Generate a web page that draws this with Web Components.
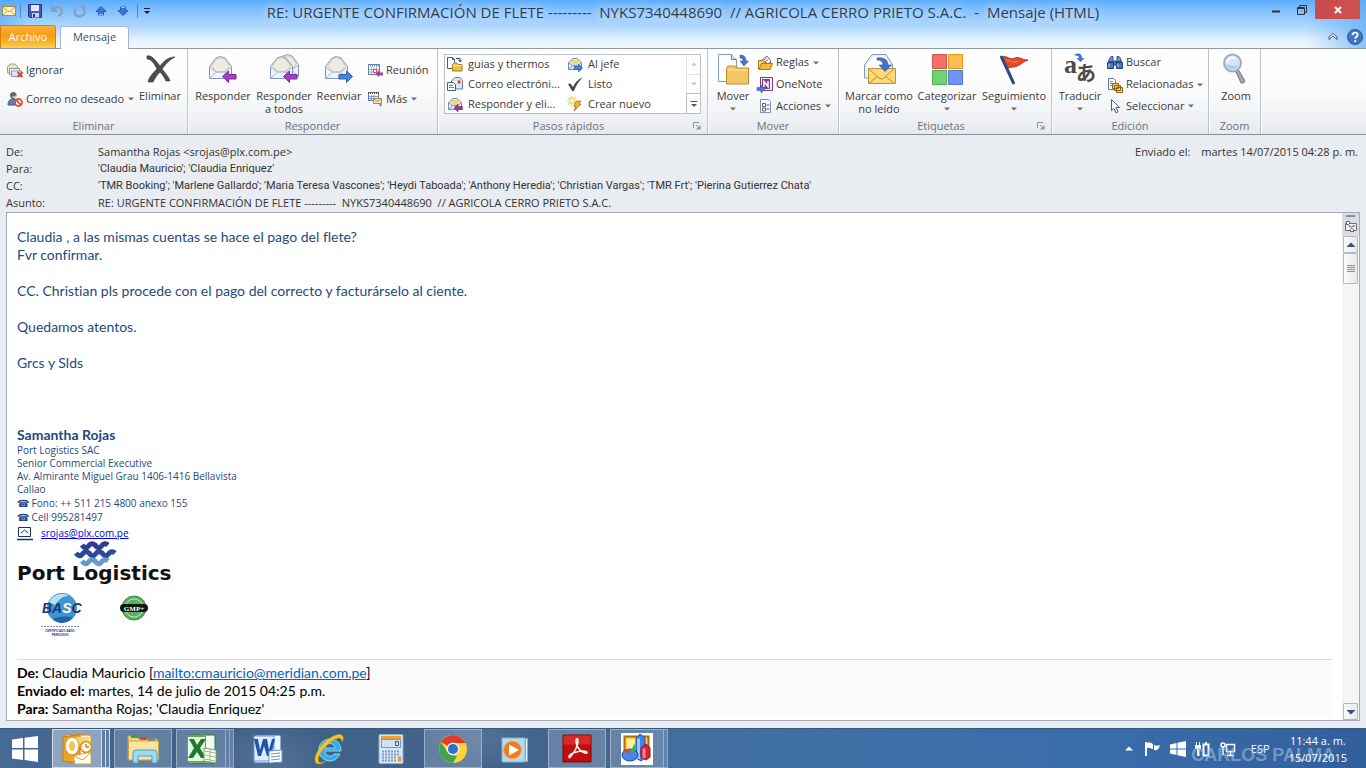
<!DOCTYPE html>
<html lang="es">
<head>
<meta charset="UTF-8">
<meta name="viewport" content="width=device-width, initial-scale=1">
<title>RE: URGENTE CONFIRMACIÓN DE FLETE - Mensaje (HTML)</title>
<style>
  * { box-sizing: border-box; }
  html, body { height: 100%; }
  body {
    margin: 0;
    overflow: hidden;
    font-family: "Open Sans", "Noto Sans", sans-serif;
    font-size: 11px;
    line-height: 13px;
    color: #3b3b3b;
    background: #e9ecf1;
  }
</style>
</head>
<body>
<mail-window>
  <title-bar slot="title">RE: URGENTE CONFIRMACIÓN DE FLETE ---------  NYKS7340448690  // AGRICOLA CERRO PRIETO S.A.C.  -  Mensaje (HTML)</title-bar>

  <tab-strip slot="tabs"></tab-strip>

  <ribbon-bar slot="ribbon">
    <ribbon-group label="Eliminar" style="--w: 188px">
      <ribbon-stack style="--w: 132px">
        <small-button icon="ignore">Ignorar</small-button>
        <small-button icon="junk" arrow>Correo no deseado</small-button>
      </ribbon-stack>
      <large-button icon="cross" style="--w: 48px">Eliminar</large-button>
    </ribbon-group>

    <ribbon-group label="Responder" style="--w: 250px">
      <large-button icon="reply" style="--w: 62px">Responder</large-button>
      <large-button icon="replyAll" style="--w: 60px">Responder<br>a todos</large-button>
      <large-button icon="forward" style="--w: 50px">Reenviar</large-button>
      <ribbon-stack>
        <small-button icon="meeting">Reunión</small-button>
        <small-button icon="more" arrow>Más</small-button>
      </ribbon-stack>
    </ribbon-group>

    <ribbon-group label="Pasos rápidos" launcher style="--w: 270px">
      <quick-steps>
        <small-button icon="folderMove">guias y thermos</small-button>
        <small-button icon="replySmall">Al jefe</small-button>
        <small-button icon="mailTeam">Correo electróni...</small-button>
        <small-button icon="check">Listo</small-button>
        <small-button icon="replyDelete">Responder y eli...</small-button>
        <small-button icon="createNew">Crear nuevo</small-button>
      </quick-steps>
    </ribbon-group>

    <ribbon-group label="Mover" style="--w: 131px">
      <large-button icon="move" arrow style="--w: 42px">Mover</large-button>
      <ribbon-stack>
        <small-button icon="rules" arrow>Reglas</small-button>
        <small-button icon="oneNote">OneNote</small-button>
        <small-button icon="actions" arrow>Acciones</small-button>
      </ribbon-stack>
    </ribbon-group>

    <ribbon-group label="Etiquetas" launcher style="--w: 213px">
      <large-button icon="unread" style="--w: 72px">Marcar como<br>no leído</large-button>
      <large-button icon="categories" arrow style="--w: 64px">Categorizar</large-button>
      <large-button icon="flag" arrow style="--w: 70px">Seguimiento</large-button>
    </ribbon-group>

    <ribbon-group label="Edición" style="--w: 157px">
      <large-button icon="translate" arrow style="--w: 48px">Traducir</large-button>
      <ribbon-stack>
        <small-button icon="find">Buscar</small-button>
        <small-button icon="related" arrow>Relacionadas</small-button>
        <small-button icon="pointer" arrow>Seleccionar</small-button>
      </ribbon-stack>
    </ribbon-group>

    <ribbon-group label="Zoom" style="--w: 52px">
      <large-button icon="zoom" style="--w: 46px">Zoom</large-button>
    </ribbon-group>
  </ribbon-bar>

  <message-header slot="header">
    <header-field label="De:">Samantha Rojas &lt;srojas@plx.com.pe&gt;</header-field>
    <header-field label="Para:" people>'Claudia Mauricio'; 'Claudia Enriquez'</header-field>
    <header-field label="CC:" people>'TMR Booking'; 'Marlene Gallardo'; 'Maria Teresa Vascones'; 'Heydi Taboada'; 'Anthony Heredia'; 'Christian Vargas'; 'TMR Frt'; 'Pierina Gutierrez Chata'</header-field>
    <header-field label="Asunto:">RE: URGENTE CONFIRMACIÓN DE FLETE ---------  NYKS7340448690  // AGRICOLA CERRO PRIETO S.A.C.</header-field>
    <header-field slot="sent" label="Enviado el:" compact>martes 14/07/2015 04:28 p. m.</header-field>
  </message-header>

  <message-body slot="body"></message-body>

  <task-bar slot="taskbar">
    <task-item icon="outlook" label="Outlook" open active stack="2"></task-item>
    <task-item icon="explorer" label="Explorador" open></task-item>
    <task-item icon="excel" label="Excel" open stack="2"></task-item>
    <task-item icon="word" label="Word"></task-item>
    <task-item icon="ie" label="Internet Explorer"></task-item>
    <task-item icon="calc" label="Calculadora"></task-item>
    <task-item icon="chrome" label="Chrome" open></task-item>
    <task-item icon="player" label="Reproductor"></task-item>
    <task-item icon="acrobat" label="Acrobat" open></task-item>
    <task-item icon="charts" label="Gráficos" open stack="1"></task-item>
  </task-bar>
</mail-window>

<script>
// Shapes shared by several icons
const OPEN_MAIL = `
  <path d="M2.5 13.5 9 5q4-3 9 0l6.5 8.500v12h-22z" fill="#eef3fa" stroke="#8199bd"/>
  <path d="M4.500 13 9.500 6q4-2.500 8 0l5 7-5 6h-8z" fill="#efebe0" stroke="#cfcaba"/>
  <path d="M3 14.500 9.500 19h8l6.500-4.500M3 25l6.500-6M24 25l-6.500-6" fill="none" stroke="#a3b5d1"/>`;
const OPEN_MAIL_SMALL = `
  <path d="M1.5 6.500 6 2.500h4l4.500 4v7h-13z" fill="#e8eef8" stroke="#6f8dbc"/>
  <path d="M3.500 6.500 5 4h6l1.500 2.500-4 3.500z" fill="#f7d77a"/>
  <path d="m2 13 4-3.500h4l4 3.500M2 7l4 3M14 7l-4 3" fill="none" stroke="#7f9ac5"/>`;
const PURPLE_ARROW = `<path d="m15.500 23.500 6-5.500v3.500H29v4.500h-7.500v3.500z" fill="#a33fc4" stroke="#7b2a9a"/>`;
const PAGE = `<path d="M1.500 1.500h5l2 2v9h-7z" fill="#fff" stroke="#5f7ba6"/>`;

// name: [size, markup]
const ICONS = {
  mail: [16, `<rect x="1.500" y="3.500" width="13" height="9" fill="#fff3cb" stroke="#b08a2e"/><path d="m2 4 6 5 6-5M2 12l4-4M14 12l-4-4" fill="none" stroke="#d2a336"/>`],
  save: [16, `<path d="M1.500 1.500h13v13h-12l-1-1z" fill="#4a56b8" stroke="#2b3484"/><path d="M4 2h8v6H4z" fill="#e3e9fb"/><path d="M5 10h7v4.500H5z" fill="#cdd3e6"/><path d="M6 11h2v3H6z" fill="#2b3484"/>`],
  undo: [16, `<path d="M5 6c3-3 8-2 8 2 0 2-1 4-4 5" fill="none" stroke="#8f9db0" stroke-width="2.200"/><path d="M2 2v7h7z" fill="#8f9db0"/>`],
  redo: [16, `<path d="M11.500 4.500a5 5 0 1 1-7 1" fill="none" stroke="#8f9db0" stroke-width="2.200"/><path d="M7.500 2H14v6z" fill="#8f9db0"/>`],
  up: [16, `<path d="m8 3.500 5 5h-2.500V12h-5V8.500H3z" fill="#3f74e0" stroke="#2856b8"/><path d="M6 11.500h4" stroke="#9dc0ff"/>`],
  down: [16, `<path d="m8 12.500 5-5h-2.500V4h-5v3.500H3z" fill="#3f74e0" stroke="#2856b8"/><path d="M6 4.500h4" stroke="#9dc0ff"/>`],
  customize: [8, `<path d="M1 1.500h6" stroke="#1b1b1b"/><path d="M1 4h6L4 7z" fill="#1b1b1b"/>`],
  minimize: [16, `<path d="M4 9.500h8" stroke="#2e3338" stroke-width="2"/>`],
  restore: [16, `<path d="M3.500 5.500h7v7h-7zM3 6.500h8M5.500 5.500v-2h7v7h-2" fill="none" stroke="#2e3338"/>`],
  close: [16, `<path d="m5 5 6 6M11 5l-6 6" stroke="#fff" stroke-width="2"/>`],
  collapse: [16, `<path d="m4 8 4-3.500L12 8v2.500L8 7l-4 3.500z" fill="#fff" stroke="#45566b"/>`],
  help: [16, `<circle cx="8" cy="8" r="7.500" fill="#3f76c9" stroke="#2a559b"/><path d="M5.500 6.200c0-3.400 5.200-3.400 5.200-.4 0 2-2.500 2-2.500 4" fill="none" stroke="#fff" stroke-width="1.800"/><circle cx="8.200" cy="12.200" r="1.100" fill="#fff"/>`],
  launcher: [8, `<path d="M.5 6V.5H6M3 3l3 3" fill="none" stroke="#8c949e"/><path d="M7.500 3v4.500H3z" fill="#8c949e"/>`],
  arrow: [6, `<path d="M0 1.500h6l-3 3z" fill="#6c6c6c"/>`],

  ignore: [16, `<path d="M.5 5 3 2h5l3 3v6H.5z" fill="#f5e3a4" stroke="#8aa0c3"/><path d="M2.500 6.500h10v6h-10z" fill="#edf2fa" stroke="#8199bd"/><path d="M4.500 9h10v5.500h-10z" fill="#dfe7f3" stroke="#8199bd"/><path d="m10.500 10 5 5M15.500 10l-5 5" stroke="#e0452b" stroke-width="2"/>`],
  junk: [16, `<path d="M1 14c0-4 2-6 5-6s5 2 5 6z" fill="#5a7fc0" stroke="#3c5b93"/><path d="M3 4c0-4 6.500-4 6.500 0 0 2-1.500 4.500-3.200 4.500S3 6 3 4z" fill="#64686f"/><path d="M5 5c2 1 3 .5 4-1v2c-.6 1.500-3 2-4-1z" fill="#f1d2b4"/><circle cx="11.500" cy="11.500" r="3.500" fill="#fff" stroke="#e2502f" stroke-width="1.800"/><path d="m9.200 9.200 4.600 4.600" stroke="#e2502f" stroke-width="1.800"/>`],
  cross: [32, `<path d="M3 3c5-1 8 4 13 10 4-5 8-9 15-9-6 3-9 7-13 12 4 5 7 8 8 12h-4c-2-4-4-7-6-9-3 3-5 6-7 10H4c1-5 5-9 9-13C10 10 7 6 3 6z" fill="#4d4d4d" stroke="#2f2f2f" stroke-width=".6"/>`],
  reply: [32, OPEN_MAIL + PURPLE_ARROW],
  replyAll: [32, `<g transform="translate(6 -2)">${OPEN_MAIL}</g>` + OPEN_MAIL + PURPLE_ARROW],
  forward: [32, OPEN_MAIL + `<path d="m29.500 23.500-6-5.500v3.500H16v4.500h7.500v3.500z" fill="#4a86e0" stroke="#2a5fae"/>`],
  meeting: [16, `<path d="M1.500 2.500h11v10h-11z" fill="#fff" stroke="#5d7fb9"/><path d="M1 3.500h12" stroke="#5d7fb9" stroke-width="2" stroke-dasharray="1 1"/><path d="M2 7.500h10M2 10h10M4.500 5v7M7 5v7M9.500 5v7" stroke="#9cb2d8"/><path d="M6.500 7.500h3v3h-3z" fill="#fff" stroke="#e34a2d"/><path d="m8.500 12 3.500-3.500v2h4v3h-4V15z" fill="#9b3bbd"/>`],
  more: [16, `<path d="M1.500 1.500h10v8h-10z" fill="#fff" stroke="#5d7fb9"/><path d="M1 2h11" stroke="#4a4a4a" stroke-width="2" stroke-dasharray="1 1"/><path d="M2 5.500h9M2 7.500h9M4.500 4v5M7 4v5" stroke="#7f9cce"/><path d="M6.500 7.500h8v5h-8z" fill="#ffe9a6" stroke="#b08a2e"/><path d="m7 8 3.500 2.500L14 8M12 14h3M13.500 12.500v3" fill="none" stroke="#7d86a0"/>`],
  folderMove: [16, `<path d="M.5 1.500h5l2 2v9h-7z" fill="#fff" stroke="#3f5d8f"/><path d="M5.500 1.500v2h2" fill="none" stroke="#3f5d8f"/><path d="M9 2.500h4V5M11.500 4l1.500 2 1.500-2" fill="none" stroke="#2b3f63"/><path d="M5.500 8.500 7 7h3l1 1.500h4v6.500H5.500z" fill="#f3c04f" stroke="#a87a1c"/><path d="M6 9.500h8.500" stroke="#fff0b5"/>`],
  replySmall: [16, OPEN_MAIL_SMALL + `<path d="m15.500 12-4-4v2.500H7v3h4.500V16z" fill="#3f80e0" stroke="#215aad" stroke-width=".6"/>`],
  replyDelete: [16, OPEN_MAIL_SMALL + `<path d="m7 12 4-4v2.500h4.500v3H11V16z" fill="#8f3fa4" stroke="#6b2a8a" stroke-width=".6"/>`],
  mailTeam: [16, `<path d="M4.500 5 8 1.500h5l2.500 3.500v8h-11z" fill="#dce6f6" stroke="#5f7ba6"/><path d="M5 5h10v2H5z" fill="#fff"/><circle cx="12" cy="6" r="1.800" fill="#e34a2d"/><path d="M.5 6.500h6l2 2v6h-8z" fill="#fff" stroke="#3f5d8f"/><path d="M2 9.500h4M2 11.500h5" stroke="#5f86c8"/>`],
  check: [16, `<path d="m1 8 2.500-.5L6 11c2-4.500 5-8 9.500-9.500C12 5 9 9.500 7 15H5z" fill="#4a4a4a"/>`],
  createNew: [16, `<path d="M5 0v10M0 5h10M1.500 1.500l7 7M8.500 1.500l-7 7" stroke="#e8c84e" stroke-width="1.200"/><circle cx="5" cy="5" r="2" fill="#fff4b0"/><path d="m9 5.500 5-.5-2.500 3H14l-7 7 2-4.500H7z" fill="#f6b92f" stroke="#8f6311" stroke-width=".7"/>`],
  move: [32, `<path d="M1.500 1.500h13l5 5v22h-18z" fill="#fdfeff" stroke="#8199bd"/><path d="M14.500 1.500v5h5" fill="#dfe7f3" stroke="#5f7ba6"/><path d="M23 2c5 0 6 3 6 6h2.500L27 13l-4-5h3c0-2-.5-3-3-3z" fill="#3f74d0" stroke="#28509c" stroke-width=".5"/><path d="M9.500 15.500 11 13h7l1.500 2h12v16h-22z" fill="#f3c665" stroke="#b98a30"/><path d="M10.500 17h20" stroke="#fde8ae"/>`],
  rules: [16, `<path d="M1.500 5.500h5l1 1.500h6v7h-12z" fill="#f7cf6b" stroke="#a87a1c"/><path d="m5 5 5-4 4 5-3 3z" fill="#fff" stroke="#5f7ba6"/><path d="m7 5 2.500-2M8 7l3.500-3" stroke="#e34a2d"/><path d="M2 14.500 4.500 8.500H15.500l-2.500 6z" fill="#f5b93d" stroke="#a87a1c"/>`],
  oneNote: [16, `<path d="M3.500.5h12v13h-12z" fill="#fbeefb" stroke="#80397b"/><path d="M5 2h8v10H5z" fill="#8a3a86"/><path d="M7 10V4.500l4 5V4" fill="none" stroke="#fff" stroke-width="1.500"/><path d="m8 12-4-4v2.500H0v3h4V16z" fill="#3f80e0" stroke="#215aad" stroke-width=".6"/>`],
  actions: [16, `<path d="M3.500 1.500h8l2 2v11h-10z" fill="#f5f8fd" stroke="#7d93b8"/><path d="M9.500 7h3M9.500 11h3" stroke="#48699f"/><path d="M5.500 5.500h3v3h-3zM5.500 10h3v3h-3z" fill="#fff" stroke="#5b6472"/>`],
  unread: [32, `<path d="M1.500 12 9 1.500h14l6.500 10.500v13h-28z" fill="#e9f0fa" stroke="#8199bd"/><path d="M4 12 10 3.500h12l5.500 8.500v4H4z" fill="#fff"/><path d="M5.500 15.500h27v15h-27z" fill="#fbd978" stroke="#c09130"/><path d="m6 16 10 9q2.500 2 5 0l10-9M6 30l9-7M31 30l-9-7" fill="none" stroke="#c09130"/><path d="M14 5c7-1 11 2 11 7h3.500L22 18.500 16 12h4c0-3-2-5-6-5z" fill="#3f74d0" stroke="#28509c" stroke-width=".6"/>`],
  categories: [32, `<path d="M1.500 1.500h14v14h-14z" fill="#f4716b" stroke="#d8534d"/><path d="M17.500 1.500h14v14h-14z" fill="#fcbb55" stroke="#e39a12"/><path d="M1.500 17.500h14v14h-14z" fill="#72d170" stroke="#4cb54a"/><path d="M17.500 17.500h14v14h-14z" fill="#7193f2" stroke="#5478dd"/>`],
  flag: [32, `<path d="M4 4c5-2 8 4 13 1 4-2 6 2 13 2-6 2-7 5-11 6-4 2-6 0-10 3z" fill="#e8472a" stroke="#b7301a"/><path d="M8 7c4 0 6 4 12 1" fill="none" stroke="#f98a6a"/><path d="m3.500 4 12 26" stroke="#2e4b80" stroke-width="3" stroke-linecap="round"/>`],
  translate: [32, `<text x="0" y="20" font-family="Liberation Serif, serif" font-weight="bold" font-size="26" fill="#4a4a4a">a</text><text x="12" y="28" font-family="Noto Sans CJK JP, sans-serif" font-weight="bold" font-size="20" fill="#4a4a4a">あ</text><path d="M10 2c5-3 8-1 8 3h2.500l-4 4-4-4H15c0-2-2-2.500-5-3z" fill="#3f74d0"/>`],
  find: [16, `<path d="M2.500 3.500 4 1.500h2v5H1.500zM13.500 3.500 12 1.500h-2v5h4.500z" fill="#6d93cf" stroke="#2b4f8d"/><path d="M.5 7.500h6v6h-6zM9.500 7.500h6v6h-6zM6.500 6h3v4h-3z" fill="#4d76b8" stroke="#264679"/><path d="M2 9v3M11 9v3" stroke="#c5d8f3"/>`],
  related: [16, PAGE + `<path d="M3 4.500h3M3 6.500h4M3 8.500h4" stroke="#5f86c8"/><path d="M5.500 6.500h6v5h-6zM7.500 8.500h6v5h-6zM9.500 10.500h6v5h-6z" fill="#f7cf6b" stroke="#8a6414"/>`],
  pointer: [16, `<path d="m4.500 1.500 8 8H9l2 4.500-2 .8-2-4.500-2.500 2.500z" fill="#fff" stroke="#44618f"/>`],
  zoom: [32, `<path d="m16 17 2-1 7 12q-1 3-4 2l-5-11z" fill="#a9a9a9" stroke="#777"/><circle cx="12.500" cy="10" r="8.500" fill="#d5e6fb" stroke="#a4acb8" stroke-width="2"/><path d="M6 11c1 6 9 8 13 1-5 1-9 1-13-1z" fill="#a9cdf6"/><path d="M7 9c1-4 5-5 8-4" fill="none" stroke="#fff" stroke-width="2"/>`],
  reading: [16, `<path d="M2.500 4.500h11v7h-11z" fill="#f2eef2" stroke="#6a6f77"/><path d="m6 6 1 2h2l2-2v2" fill="none" stroke="#8a5f70"/><path d="M3.500 2.500h3v2l-1 1h-2zM7.500 12.500v-2l1-1h1l1 1v2z" fill="#fff" stroke="#5f6368"/>`],
  grip: [8, `<path d="M0 .5h8M0 2.500h8M0 4.500h8M0 6.500h8" stroke="#8b9097"/>`],
  scrollUp: [10, `<path d="m5 2.500 4.500 4.500h-9z" fill="#3c4f7d"/>`],
  scrollDown: [10, `<path d="m5 7.500 4.500-4.500h-9z" fill="#3c4f7d"/>`],
  galleryUp: [6, `<path d="M0 4.500h6l-3-3z" fill="#c3c7cc"/>`],
  galleryDown: [6, `<path d="M0 1.500h6l-3 3z" fill="#c3c7cc"/>`],
  galleryMore: [8, `<path d="M.5 1.500h7" stroke="#555"/><path d="M1 4h6L4 7z" fill="#555"/>`],
  envelopeSign: [16, `<path d="M1.500 2.500h12v9h-12z" fill="#fff" stroke="#17365d"/><path d="m4 8 3.500-3L11 8" fill="none" stroke="#17365d"/><path d="M0 14.500h16" stroke="#17365d" stroke-width="1.500"/>`],

  windows: [26, `<path d="M0 3.500 11 2v10H0zM12.500 1.800 26 0v12H12.500zM0 13.500h11V24L0 22.500zM12.500 13.500H26V26l-13.500-2z" fill="#fff"/>`],
  outlook: [32, `<path d="M4 2h24q2 0 2 2v24H6z" fill="#fff6d8" stroke="#d88b15"/><path d="M2 4 19 1.500v29L2 28z" fill="#f0a31e" stroke="#ce7b0c"/><path d="M15 4h13v9H15z" fill="#ffd56a"/><ellipse cx="11" cy="13" rx="5" ry="7" fill="#f7c348" stroke="#fff" stroke-width="4"/><ellipse cx="11" cy="13" rx="7" ry="9" fill="none" stroke="#dc8613"/><circle cx="25" cy="14" r="5.500" fill="#fff8e5" stroke="#d9921f" stroke-width="1.500"/><path d="M25 11v3h3" fill="none" stroke="#88560d"/><path d="m12 23 18-4v12H14z" fill="#fffdf3" stroke="#d3a44c"/><path d="m12 23 10 4 8-8" fill="none" stroke="#d3a44c"/>`],
  explorer: [34, `<path d="M2 4h9l1.500 3H31v20H2z" fill="#efd485" stroke="#c19d40"/><path d="M5 3h7v3H5z" fill="#39a04b"/><path d="M14 5h7v3h-7z" fill="#d8472c"/><path d="M22 7h7v3h-7z" fill="#3f7fd6"/><path d="M2.500 9h30v19h-30z" fill="#f8e3a0" stroke="#c9a54a"/><path d="M7 31V21q0-3 3-3h18q3 0 3 3v10h-5v-7H12v7z" fill="#9bdcf3" stroke="#4a9fc8"/>`],
  excel: [32, `<path d="M5 2h24q1 0 1 1v26q0 1-1 1H3z" fill="#f1faed" stroke="#287a31"/><path d="m2 3 19-2v29L2 29z" fill="#5cab4b"/><path d="M3 4h17v24H3z" fill="#e6f5df"/><path d="M4 6h5l3 6 4-6h5l-6 9 6 10h-5l-4-6-4 6H3l6-10z" fill="#1f7a31"/><path d="m19 15 12 2v13l-12-2z" fill="#fff" stroke="#65a856"/><path d="m20 18 10 2M20 22l10 2M20 26l10 2M25 16v13" stroke="#8cbb7e"/>`],
  word: [32, `<path d="M5 2h24q1 0 1 1v26q0 1-1 1H3z" fill="#eff5fd" stroke="#3768b2"/><path d="M3 3h20v25H3z" fill="#dfebfa" stroke="#6f99d6"/><path d="M3 6h4l2 11 3-11h4l2 11 3-11h3l-4 17h-4l-3-10-3 10H7z" fill="#1c55ad"/><path d="m18 18 13-1v12l-13 1z" fill="#fff" stroke="#6d92c9"/><path d="m20 21 9-1M20 24l9-1M20 27l9-1" stroke="#7296c9"/>`],
  ie: [32, `<path d="M17 6a11 11 0 1 0 10 15h-6c-3 4-9 2-9-3h16c0-7-4-12-11-12zm-5 9c1-6 9-6 10 0z" fill="#35aee8" stroke="#a7e5fa" stroke-width=".8"/><path d="M6 31C-1 31 2 20 9 12S28-2 30 4c1 2-1 5-1 5 0-4-3-6-10-1C10 14 3 25 6 29c2 2 7-1 7-1-2 2-5 3-7 3z" fill="#f7c51f" stroke="#c99812" stroke-width=".5"/>`],
  calc: [32, `<path d="M5 1.500h22q1 0 1 1v27q0 1-1 1H5q-1 0-1-1v-27q0-1 1-1z" fill="#d7e6f4" stroke="#8fb2d2"/><path d="M6 3h20v3H6z" fill="#f29c38"/><path d="M6.500 6.500h19v8h-19z" fill="#cfe3f4" stroke="#7998b5"/><path d="M20.500 8.500h3v4h-3z" fill="none" stroke="#41556b"/><path d="M7 18.500h18M7 21.500h18M7 24.500h15M7 27.500h15" stroke="#7da0bf" stroke-width="2" stroke-dasharray="2 1"/><path d="M23 23.500h3v5h-3z" fill="#f0932b"/>`],
  chrome: [32, `<circle cx="16" cy="16" r="14" fill="#fdd23a"/><path d="M16 16 3.900 9a14 14 0 0 1 24.200 0L29 10H16z" fill="#dd3d2f"/><path d="M16 30A14 14 0 0 1 3.900 9l6.500 10L16 22l4 1z" fill="#3fa54a"/><path d="M10 10h18.800L16 9z" fill="#c8301f"/><circle cx="16" cy="16" r="6.500" fill="#eef2f6"/><circle cx="16" cy="16" r="5" fill="#2f72c4"/>`],
  player: [32, `<path d="M22 5h7v24h-7z" fill="#6db7d8"/><path d="M3 5h23v24H3z" fill="#b6d9ec" stroke="#7bb4d2"/><path d="M27.500 6v22" stroke="#dff2fb"/><circle cx="13.500" cy="17" r="9" fill="#f07c1f" stroke="#f6b173"/><path d="m10 11.500 10 5.500-10 5.500z" fill="#fff"/>`],
  acrobat: [30, `<path d="M1 1h28v27H1z" fill="#c30d0d" stroke="#7f0707"/><path d="M1.500 1.500h27v9h-27z" fill="#d62a25"/><path d="M7 23c-1-3 8-6 14-6 5 0 5 3 2 2-5-1-9-7-9-12 0-3 2-3 2 0 0 5-4 12-7 15-1 2-2 2-2 1z" fill="none" stroke="#fff" stroke-width="1.500"/>`],
  charts: [32, `<path d="M0 0h32v32H0z" fill="#fff"/><path d="M3.500 3.500h24v19h-24z" fill="#ffcf3a" stroke="#a96d13" stroke-width="2"/><path d="M6 6h12v10H6z" fill="#fff0a0"/><path d="m15 5 4-4 5 4v20l-4 3-5-3z" fill="#3f84ee" stroke="#1b4da8"/><path d="M16 5.500h3V26h-3z" fill="#9cc6ff"/><path d="m20 15 5-4 4 4v9l-4 3-5-3z" fill="#d82430" stroke="#941018"/><path d="M21.500 15.500h3V25h-3z" fill="#ff7f84"/><ellipse cx="9" cy="22" rx="8" ry="6" fill="#4a86e4" stroke="#1b4da8"/><path d="m9 21-6-3c2-2 4-2 6-2z" fill="#e5452d"/><path d="m9 19 5-9v8z" fill="#3fb449"/>`],
  trayUp: [10, `<path d="m5 2.500 4 4H1z" fill="#fff"/>`],
  trayFlag: [18, `<path d="M3 2v14" stroke="#fff" stroke-width="2"/><path d="M4 3c3-1 4 0 6 1v5c-2 0-3-2-6-1zM11 5c2 1 4 1 6 0-1 2-1 4-3 5-1 .5-3 0-3 0z" fill="#fff"/>`],
  trayWindows: [16, `<path d="M0 3.500 6.500 2v5.500H0zM7.500 1.800 16 0v7.500H7.500zM0 8.500h6.500V14L0 12.500zM7.500 8.500H16V16l-8.500-1.800z" fill="#fff"/>`],
  trayBattery: [16, `<path d="M8.500 3.500h5v11h-5z" fill="none" stroke="#fff" stroke-width="2"/><path d="M10 1h2v2h-2zM1 1h1v3H1zM4 1h1v3H4zM0 4h6v4H4.500v7H2V8H0z" fill="#fff"/>`],
  trayNetwork: [16, `<path d="M6.500 3.500h8v7h-8zM10.500 11v3M7 14.500h7" fill="none" stroke="#fff" stroke-width="1.500"/><circle cx="3" cy="4" r="2" fill="none" stroke="#fff" stroke-width="1.500"/><path d="M3 6v8" stroke="#fff" stroke-width="1.500"/>`],
};

// Base class: clones the template of the class into an open shadow root
class ShadowElement extends HTMLElement {
  constructor() {
    super();
    this.attachShadow({ mode: "open" });
    const template = document.createElement("template");
    template.innerHTML = `<style>
      *, :host { box-sizing: border-box; }
      button { font: inherit; color: inherit; background: none; border: 0; padding: 0; margin: 0; }
      ${this.styles()}
    </style>${this.render()}`;
    this.shadowRoot.appendChild(template.content.cloneNode(true));
  }
  styles() { return ":host { display: block; }"; }
  render() { return "<slot></slot>"; }
}

class UiIcon extends ShadowElement {
  styles() {
    return `:host { display: inline-block; flex: none; line-height: 0; } svg { display: block; overflow: visible; }`;
  }
  render() {
    const [size, markup] = ICONS[this.getAttribute("name")];
    return `<svg width="${size}" height="${size}" viewBox="0 0 ${size} ${size}" aria-hidden="true">${markup}</svg>`;
  }
}

class MailWindow extends ShadowElement {
  styles() {
    return `
      :host { display: flex; flex-direction: column; height: 100vh; }
      .chrome {
        background:
          linear-gradient(to right, rgba(80,165,250,.6), rgba(80,165,250,0) 30px),
          linear-gradient(to left, rgba(95,170,245,.7), rgba(95,170,245,0) 60px),
          linear-gradient(#5aadfd, #8cc6ff 14px, #b4dafd 28px, #e6f3ff 40px, #f4f9fe);
      }
      slot[name="body"] { display: flex; flex: 1; min-height: 0; padding: 0 6px 7px; }
    `;
  }
  render() {
    return `
      <div class="chrome"><slot name="title"></slot><slot name="tabs"></slot></div>
      <slot name="ribbon"></slot>
      <slot name="header"></slot>
      <slot name="body"></slot>
      <slot name="taskbar"></slot>
    `;
  }
}

class TitleBar extends ShadowElement {
  styles() {
    return `
      :host { display: grid; grid-template-columns: 1fr auto 1fr; align-items: start; height: 25px; }
      nav { display: flex; align-items: center; height: 22px; padding-left: 1px; }
      nav button { display: flex; justify-content: center; width: 22px; }
      nav button:first-child { width: 16px; }
      nav button:last-child { width: 12px; }
      i { width: 1px; height: 14px; margin: 0 3px; background: #5d87b5; }
      h1 {
        margin: 0; font-size: 15px; font-weight: 400; line-height: 25px; white-space: pre; color: #2f3d4d;
        text-shadow: 0 0 8px rgba(255,255,255,.8), 0 0 14px rgba(255,255,255,.6);
      }
      .controls { display: flex; justify-content: flex-end; padding-right: 6px; }
      .controls button { display: flex; align-items: center; justify-content: center; width: 26px; height: 19px; }
      .controls .close { width: 45px; margin-left: 0; background: linear-gradient(to right, #c74a4c, #d0524f); }
    `;
  }
  render() {
    const tool = (name, label) => `<button aria-label="${label}"><ui-icon name="${name}"></ui-icon></button>`;
    return `
      <nav aria-label="Acceso rápido">
        ${tool("mail", "Mensaje")}<i></i>
        ${tool("save", "Guardar")}${tool("undo", "Deshacer")}${tool("redo", "Rehacer")}
        ${tool("up", "Anterior")}${tool("down", "Siguiente")}<i></i>${tool("customize", "Personalizar")}
      </nav>
      <h1><slot></slot></h1>
      <div class="controls">
        <button aria-label="Minimizar"><ui-icon name="minimize"></ui-icon></button>
        <button aria-label="Restaurar"><ui-icon name="restore"></ui-icon></button>
        <button class="close" aria-label="Cerrar"><ui-icon name="close"></ui-icon></button>
      </div>
    `;
  }
}

class TabStrip extends ShadowElement {
  styles() {
    return `
      :host { display: flex; align-items: flex-end; height: 24px; border-bottom: 1px solid #8f9aa8; }
      .file {
        align-self: stretch; width: 56px; padding-bottom: 2px; color: #fff; border: 1px solid #d67d0a; border-bottom: 0;
        border-radius: 0 3px 0 0; background: linear-gradient(#fdb13a, #f79a12 45%, #f9a81c 60%, #ffd04c);
      }
      .tab {
        height: 23px; width: 69px; margin: 0 0 -1px 4px; padding-bottom: 4px; background: #fff; color: #43505f;
        border: 1px solid #a3b6cb; border-bottom: 0; border-radius: 3px 3px 0 0;
      }
      .right { display: flex; align-items: center; gap: 6px; margin-left: auto; padding-right: 3px; height: 100%; }
      .right button { display: flex; }
    `;
  }
  render() {
    return `
      <button class="file">Archivo</button>
      <button class="tab">Mensaje</button>
      <div class="right">
        <button aria-label="Contraer la cinta"><ui-icon name="collapse"></ui-icon></button>
        <button aria-label="Ayuda"><ui-icon name="help"></ui-icon></button>
      </div>
    `;
  }
}

class RibbonBar extends ShadowElement {
  styles() {
    return `
      :host {
        display: flex; height: 86px; border-bottom: 1px solid #8b9097;
        background: linear-gradient(#fff, #fbfbfc 50%, #e7eaee);
      }
    `;
  }
}

class RibbonGroup extends ShadowElement {
  styles() {
    return `
      :host {
        display: flex; flex-direction: column; flex: none; width: var(--w);
        border-right: 1px solid #bcc2c9; box-shadow: 1px 0 #fff;
      }
      .items { display: flex; flex: 1; padding: 0 0 0 4px; }
      footer { display: flex; align-items: center; height: 16px; padding: 0 6px; color: #69727e; }
      span { flex: 1; padding-bottom: 2px; text-align: center; }
      footer button { display: flex; }
    `;
  }
  render() {
    const launcher = this.hasAttribute("launcher")
      ? `<button aria-label="Más opciones"><ui-icon name="launcher"></ui-icon></button>` : "";
    return `
      <div class="items"><slot></slot></div>
      <footer><span>${this.getAttribute("label")}</span>${launcher}</footer>
    `;
  }
}

class RibbonStack extends ShadowElement {
  styles() {
    return `
      :host { display: flex; flex-direction: column; justify-content: space-evenly; width: var(--w, auto); padding: 2px 0 0 3px; }
    `;
  }
}

class LargeButton extends ShadowElement {
  styles() {
    return `
      :host { display: block; flex: none; width: var(--w); }
      button { display: flex; flex-direction: column; align-items: center; width: 100%; padding-top: 4px; white-space: nowrap; }
      span { margin-top: 4px; }
      .arrow { margin-top: 4px; }
    `;
  }
  render() {
    const arrow = this.hasAttribute("arrow") ? `<ui-icon class="arrow" name="arrow"></ui-icon>` : "";
    return `<button><ui-icon name="${this.getAttribute("icon")}"></ui-icon><span><slot></slot></span>${arrow}</button>`;
  }
}

class SmallButton extends ShadowElement {
  styles() {
    return `
      :host { display: block; }
      button { display: flex; align-items: center; gap: var(--gap, 3px); white-space: nowrap; height: 20px; }
      span { padding-bottom: 2px; }
      .arrow { margin-left: 1px; }
    `;
  }
  render() {
    const arrow = this.hasAttribute("arrow") ? `<ui-icon class="arrow" name="arrow"></ui-icon>` : "";
    return `<button><ui-icon name="${this.getAttribute("icon")}"></ui-icon><span><slot></slot></span>${arrow}</button>`;
  }
}

class QuickSteps extends ShadowElement {
  styles() {
    return `
      :host { display: flex; height: 60px; width: 257px; margin: 5px 0 0 2px; border: 1px solid #b9bfc7; background: #fff; }
      .list { display: grid; grid-template-columns: 120px 1fr; flex: 1; align-content: center; padding-left: 2px; --gap: 5px; }
      .scroll { display: flex; flex-direction: column; width: 14px; border-left: 1px solid #e0e3e7; }
      .scroll button { display: flex; flex: 1; align-items: center; justify-content: center; border-bottom: 1px solid #e0e3e7; }
      .scroll button:last-child { border: 0; box-shadow: 0 0 0 1px #b9bfc7; }
    `;
  }
  render() {
    return `
      <div class="list"><slot></slot></div>
      <div class="scroll">
        <button aria-label="Subir"><ui-icon name="galleryUp"></ui-icon></button>
        <button aria-label="Bajar"><ui-icon name="galleryDown"></ui-icon></button>
        <button aria-label="Más"><ui-icon name="galleryMore"></ui-icon></button>
      </div>
    `;
  }
}

class MessageHeader extends ShadowElement {
  styles() {
    return `
      :host { display: flex; justify-content: space-between; padding: 8px 8px 1px 6px; }
    `;
  }
  render() {
    return `<div><slot></slot></div><div><slot name="sent"></slot></div>`;
  }
}

class HeaderField extends ShadowElement {
  styles() {
    return `
      :host { display: flex; line-height: 17px; color: #333; white-space: pre; }
      b { font-weight: 400; width: 92px; }
      :host([compact]) b { width: auto; margin-right: 11px; }
      :host([people]) span { font-family: Roboto, sans-serif; }
    `;
  }
  render() {
    return `<b>${this.getAttribute("label")}</b><span><slot></slot></span>`;
  }
}

class MessageBody extends ShadowElement {
  styles() {
    return `
      :host { display: flex; flex: 1; min-width: 0; border: 1px solid #a4abb5; background: #fff; overflow: hidden; }
      article { flex: 1; min-width: 0; overflow: hidden; padding: 15px 10px 0; font-family: Lato, sans-serif; font-size: 14px; line-height: 18px; font-variant-ligatures: none; color: #1f497d; }
      p { margin: 0 0 18px; }
      .signature { margin-top: 54px; }
      .signature strong { display: block; }
      address { font-family: "Open Sans", sans-serif; font-style: normal; font-size: 10px; line-height: 13px; }
      .phone { line-height: 14px; }
      .mail { display: flex; align-items: center; gap: 8px; height: 18px; }
      .mail a { color: #0000ee; }
      .quoted { margin-top: 22px; padding-top: 4px; border-top: 1px solid #d9dbde; color: #000; background: #fbfbfc; }
      .quoted a { color: #0563c1; }
    `;
  }
  render() {
    return `
      <article>
        <p>Claudia , a las mismas cuentas se hace el pago del flete?<br>Fvr confirmar.</p>
        <p>CC. Christian pls procede con el pago del correcto y facturárselo al ciente.</p>
        <p>Quedamos atentos.</p>
        <p>Grcs y Slds</p>
        <section class="signature">
          <strong>Samantha Rojas</strong>
          <address>
            <div>Port Logistics SAC</div>
            <div>Senior Commercial Executive</div>
            <div>Av. Almirante Miguel Grau 1406-1416 Bellavista</div>
            <div>Callao</div>
            <div class="phone">☎ Fono: ++ 511 215 4800 anexo 155</div>
            <div class="phone">☎ Cell 995281497</div>
            <div class="mail"><ui-icon name="envelopeSign"></ui-icon><a href="mailto:srojas@plx.com.pe">srojas@plx.com.pe</a></div>
          </address>
          <company-logos></company-logos>
        </section>
        <section class="quoted">
          <b>De:</b> Claudia Mauricio [<a href="mailto:cmauricio@meridian.com.pe">mailto:cmauricio@meridian.com.pe</a>]<br>
          <b>Enviado el:</b> martes, 14 de julio de 2015 04:25 p.m.<br>
          <b>Para:</b> Samantha Rojas; 'Claudia Enriquez'
        </section>
      </article>
      <scroll-track></scroll-track>
    `;
  }
}

class CompanyLogos extends ShadowElement {
  styles() {
    return `:host { display: block; line-height: 0; } svg { display: block; overflow: visible; }`;
  }
  render() {
    const wave = (x, y, n, color) => {
      let d = `M${x} ${y}`;
      for (let i = 0; i < n; i++) d += "q3.500 5 6.500 1t6.500-1";
      return `<path d="${d}" fill="none" stroke="${color}" stroke-width="5"/>`;
    };
    return `
      <svg width="170" height="95" viewBox="0 0 170 95" role="img" aria-label="Port Logistics, BASC, GMP+">
        ${wave(65, 3, 2, "#2f3c8f")}${wave(59, 11, 3, "#2c4a9c")}${wave(65, 19, 2, "#6a97cc")}
        <text x="0" y="38" font-family="DejaVu Sans, sans-serif" font-weight="bold" font-size="20" fill="#111">Port Logistics</text>
        <circle cx="45" cy="66" r="15" fill="#3f97d2"/>
        <path d="M32 60c4-8 14-10 20-6-8 0-10 4-14 9z" fill="#b9dff4"/>
        <path d="M36 77c6-3 12-3 20-2-6 8-16 7-20 2z" fill="#1c63a8"/>
        <text x="25" y="71" font-family="Liberation Sans, sans-serif" font-weight="bold" font-style="italic" font-size="14" fill="#183a73">BA<tspan fill="#fff">S</tspan>C</text>
        <path d="M24 84.500h38" stroke="#7d84ab" stroke-dasharray="2 1"/>
        <text x="43" y="90" text-anchor="middle" font-family="Liberation Sans, sans-serif" font-weight="bold" font-size="3" fill="#2a3570">CERTIFICADO BASC</text>
        <text x="43" y="94" text-anchor="middle" font-family="Liberation Sans, sans-serif" font-weight="bold" font-size="3" fill="#2a3570">PERU00000</text>
        <circle cx="117" cy="66" r="12" fill="#5fb064" stroke="#2f8a3c"/>
        <circle cx="117" cy="66" r="9" fill="none" stroke="#bfe3bf"/>
        <rect x="103" y="62" width="28" height="8" rx="4" fill="#0d1a10"/>
        <text x="117" y="69" text-anchor="middle" font-family="Liberation Serif, serif" font-weight="bold" font-size="7" fill="#fff">GMP+</text>
      </svg>
    `;
  }
}

class ScrollTrack extends ShadowElement {
  styles() {
    return `
      :host { display: flex; flex-direction: column; flex: none; width: 17px; background: #f5f5f6; }
      .top { display: flex; flex-direction: column; align-items: center; height: 23px; padding-top: 2px; background: #d8dde4; }
      .top i { width: 9px; height: 2px; margin-bottom: 2px; background: #8a9097; }
      button { display: flex; align-items: center; justify-content: center; width: 15px; height: 17px; margin-left: 1px;
        border: 1px solid #b4b9c0; border-radius: 1px; background: linear-gradient(to right, #fafafa, #e7e8ea); }
      .thumb { height: 31px; }
      .end { margin-top: auto; }
    `;
  }
  render() {
    return `
      <div class="top"><i></i><ui-icon name="reading"></ui-icon></div>
      <button aria-label="Subir"><ui-icon name="scrollUp"></ui-icon></button>
      <button class="thumb" aria-label="Desplazar"><ui-icon name="grip"></ui-icon></button>
      <button class="end" aria-label="Bajar"><ui-icon name="scrollDown"></ui-icon></button>
    `;
  }
}

class TaskBar extends ShadowElement {
  styles() {
    return `
      :host {
        display: flex; align-items: stretch; position: relative; flex: none; height: 40px; color: #fff;
        border-top: 1px solid #35597f;
        background:
          radial-gradient(60px 40px at 270px 30px, rgba(150,170,195,.25), transparent),
          radial-gradient(50px 30px at 480px 10px, rgba(150,170,195,.2), transparent),
          linear-gradient(to right, #456a93, #3f5f86 260px, #45678f 620px, #416f9f 680px, #3a6dac 1100px, #315f9c);
      }
      .start { display: flex; align-items: center; justify-content: center; width: 50px; }
      .items { display: flex; gap: 4px; margin-left: 2px; }
      .tray { display: flex; align-items: center; gap: 9px; margin-left: auto; padding-right: 19px; }
      .tray button { display: flex; }
      .lang { margin-left: 6px; }
      time { margin-left: 10px; text-align: center; line-height: 17px; z-index: 1; }
      /* desktop watermark that shows through the tray */
      .mark { position: absolute; right: 31px; bottom: 3px; font: bold 18px/20px "Liberation Sans", sans-serif; color: rgba(150,190,225,.6); }
    `;
  }
  render() {
    const tray = (name, label) => `<button aria-label="${label}"><ui-icon name="${name}"></ui-icon></button>`;
    return `
      <button class="start" aria-label="Inicio"><ui-icon name="windows"></ui-icon></button>
      <div class="items"><slot></slot></div>
      <div class="mark">CARLOS PALMA</div>
      <div class="tray">
        ${tray("trayUp", "Iconos ocultos")}${tray("trayFlag", "Centro de actividades")}${tray("trayWindows", "Windows")}
        ${tray("trayBattery", "Batería")}${tray("trayNetwork", "Red")}
        <button class="lang">ESP</button>
        <time datetime="2015-07-15T11:44">11:44 a. m.<br>15/07/2015</time>
      </div>
    `;
  }
}

class TaskItem extends ShadowElement {
  styles() {
    return `
      :host { display: flex; width: 58px; }
      button { display: flex; flex: 1; align-items: center; justify-content: center; border: 1px solid transparent; }
      i { width: 4px; border: 1px solid rgba(190,205,222,.55); border-left: 0; background: rgba(190,205,222,.25); }
      :host([open]) button { border-color: rgba(190,205,222,.6); background: rgba(190,205,222,.28); }
      :host([active]) button { border-color: #d3dbe5; background: rgba(220,228,238,.5); }
      :host([active]) i { border-color: #d3dbe5; }
    `;
  }
  render() {
    const stack = "<i></i>".repeat(Number(this.getAttribute("stack")) || 0);
    return `<button aria-label="${this.getAttribute("label")}"><ui-icon name="${this.getAttribute("icon")}"></ui-icon></button>${stack}`;
  }
}

customElements.define("ui-icon", UiIcon);
customElements.define("mail-window", MailWindow);
customElements.define("title-bar", TitleBar);
customElements.define("tab-strip", TabStrip);
customElements.define("ribbon-bar", RibbonBar);
customElements.define("ribbon-group", RibbonGroup);
customElements.define("ribbon-stack", RibbonStack);
customElements.define("large-button", LargeButton);
customElements.define("small-button", SmallButton);
customElements.define("quick-steps", QuickSteps);
customElements.define("message-header", MessageHeader);
customElements.define("header-field", HeaderField);
customElements.define("message-body", MessageBody);
customElements.define("company-logos", CompanyLogos);
customElements.define("scroll-track", ScrollTrack);
customElements.define("task-bar", TaskBar);
customElements.define("task-item", TaskItem);
</script>
</body>
</html>
